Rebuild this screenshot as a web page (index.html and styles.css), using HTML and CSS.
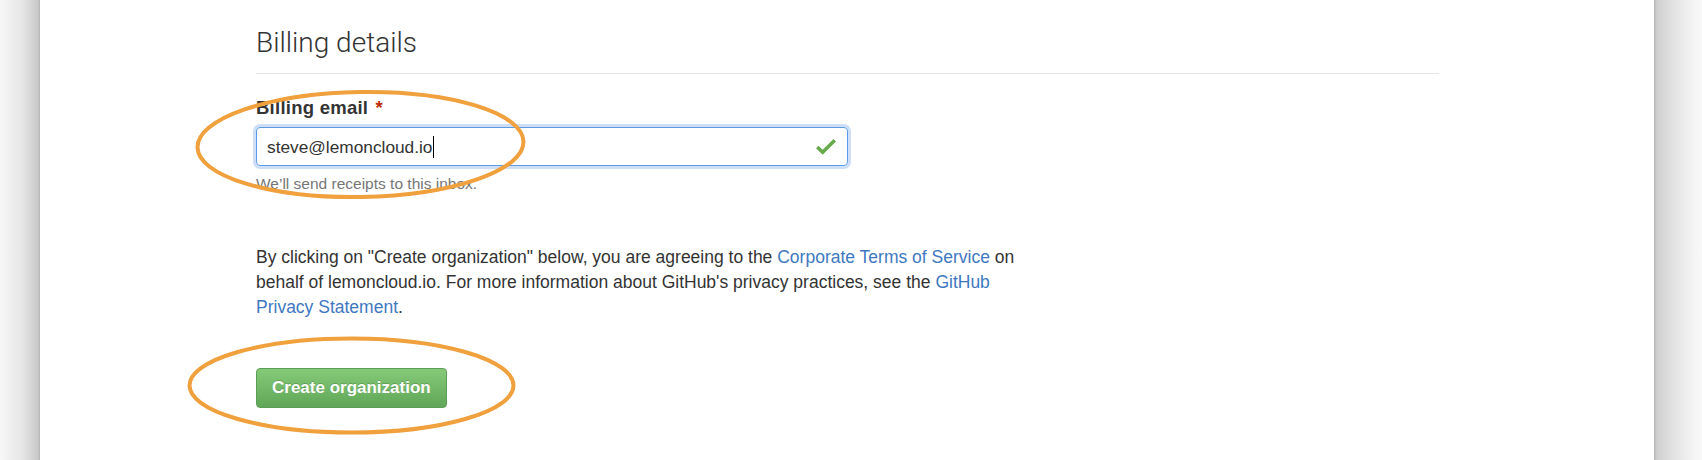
FILE: index.html
```html
<!DOCTYPE html>
<html lang="en">
<head>
<meta charset="utf-8">
<title>Billing details</title>
<link rel="stylesheet" href="styles.css">
</head>
<body>
<div class="frame">
  <div class="gutter gutter-left"></div>
  <main class="panel">
    <div class="content">
      <h2 class="subhead">Billing details</h2>
      <div class="field">
        <label class="label">Billing email <span class="req">*</span></label>
        <div class="input">
          <span class="value">steve@lemoncloud.io</span><span class="caret"></span>
          <svg class="check" width="20" height="27" viewBox="0 0 12 16" aria-hidden="true"><path d="M12 5l-8 8-4-4 1.5-1.5L4 10l6.5-6.5L12 5z"/></svg>
        </div>
        <p class="note">We’ll send receipts to this inbox.</p>
      </div>
      <p class="terms">By clicking on "Create organization" below, you are agreeing to the <a href="#">Corporate Terms of Service</a> on behalf of lemoncloud.io. For more information about GitHub's privacy practices, see the <a href="#">GitHub Privacy Statement</a>.</p>
      <button class="btn-primary" type="button">Create organization</button>
    </div>
    <svg class="mark mark-email" width="342" height="120" viewBox="0 0 342 120" aria-hidden="true"><ellipse cx="170.5" cy="59.5" rx="163" ry="52.5" transform="rotate(-1 170.5 59.5)"/></svg>
    <svg class="mark mark-button" width="345" height="110" viewBox="0 0 345 110" aria-hidden="true"><ellipse cx="171.5" cy="55.5" rx="162" ry="47"/></svg>
  </main>
  <div class="gutter gutter-right"></div>
</div>
</body>
</html>
```

FILE: styles.css
```css
html, body {
  margin: 0;
  padding: 0;
  background: #ffffff;
}

.frame {
  display: flex;
  height: 460px;
  overflow: hidden;
  font-family: "Liberation Sans", Arial, sans-serif;
  color: #333333;
}

.gutter {
  flex: none;
  height: 100%;
}

.gutter-left {
  width: 40px;
  background: linear-gradient(to right, #f7f7f7 0%, #e6e6e6 55%, #c9c9c9 95%, #b4b4b4 100%);
}

.gutter-right {
  width: 48px;
  background: linear-gradient(to right, #b4b4b4 0%, #cfcfcf 6%, #e2e2e2 40%, #f3f3f3 80%, #f9f9f9 100%);
}

.panel {
  flex: 1;
  position: relative;
  background: #ffffff;
  padding: 25px 0 0 216px;
}

.content {
  width: 1183px;
}

.subhead {
  margin: 0;
  padding-bottom: 12px;
  border-bottom: 1px solid #e6e6e6;
  font-family: "Roboto", "Liberation Sans", sans-serif;
  font-weight: 300;
  font-size: 28px;
  line-height: 36px;
  color: #333333;
}

.field {
  margin-top: 21px;
}

.label {
  display: block;
  font-weight: bold;
  font-size: 18.5px;
  letter-spacing: 0.25px;
  line-height: 25px;
  color: #333333;
}

.req {
  color: #bd2c00;
  margin-left: 2px;
}

.input {
  box-sizing: border-box;
  display: flex;
  align-items: center;
  margin-top: 7px;
  width: 592px;
  height: 39px;
  padding: 0 11px 0 10px;
  border: 1px solid #5b9be6;
  border-radius: 4px;
  box-shadow: 0 0 0 3px rgba(112, 160, 230, 0.35);
  font-size: 17.3px;
  color: #333333;
}

.value {
  line-height: 24px;
}

.caret {
  width: 1px;
  height: 22px;
  margin-left: 1px;
  background: #000000;
}

.check {
  margin-left: auto;
  fill: #68ab4c;
}

.note {
  margin: 8px 0 0;
  font-size: 15.5px;
  line-height: 20px;
  color: #767676;
}

.terms {
  margin: 51px 0 0;
  width: 785px;
  font-size: 17.5px;
  line-height: 25px;
  color: #333333;
}

.terms a {
  color: #4078c0;
  text-decoration: none;
}

.btn-primary {
  display: block;
  box-sizing: border-box;
  margin-top: 48px;
  height: 40px;
  padding: 0 15px;
  border: 1px solid #5a9e55;
  border-radius: 4px;
  background: linear-gradient(to bottom, #85ca78 0%, #60a658 100%);
  color: #ffffff;
  font-family: "Liberation Sans", Arial, sans-serif;
  font-weight: bold;
  font-size: 17px;
  line-height: 38px;
  text-shadow: 0 -1px 0 rgba(0, 0, 0, 0.18);
  cursor: pointer;
}

.mark {
  position: absolute;
  overflow: visible;
  pointer-events: none;
}

.mark ellipse {
  fill: none;
  stroke: #f0a03c;
  stroke-width: 4;
}

.mark-email {
  left: 150px;
  top: 85px;
}

.mark-button {
  left: 140px;
  top: 330px;
}
```
